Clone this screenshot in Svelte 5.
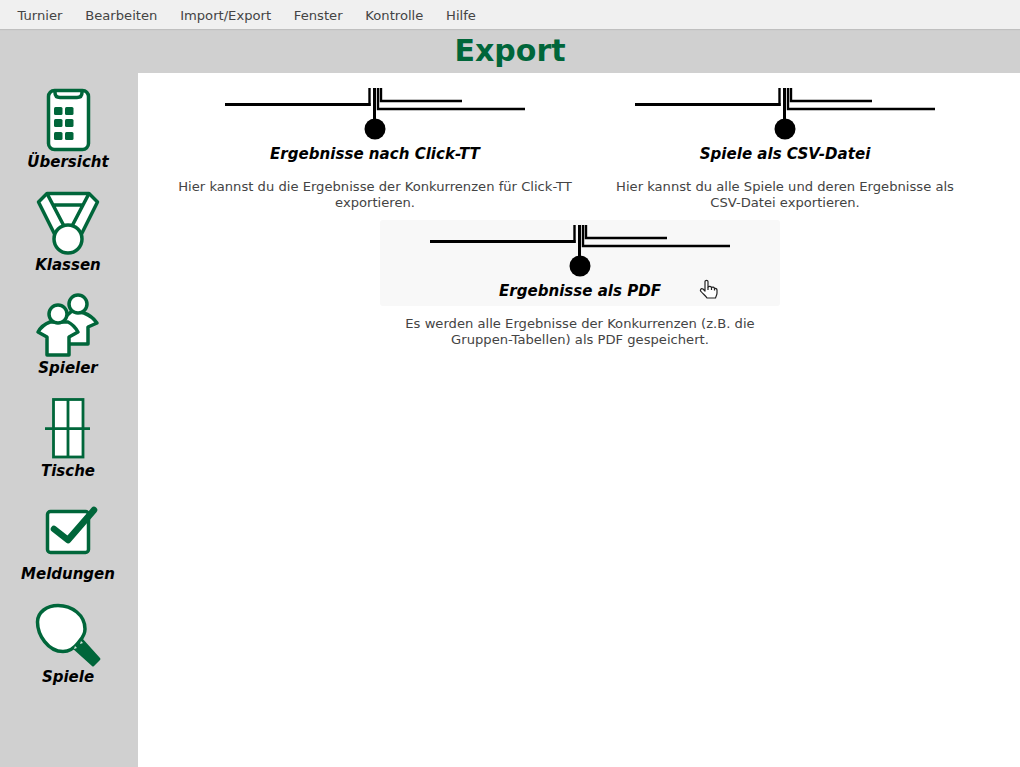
<script>
	const menu = ['Turnier', 'Bearbeiten', 'Import/Export', 'Fenster', 'Kontrolle', 'Hilfe'];

	const exports = [
		{
			title: 'Ergebnisse nach Click-TT',
			text: ['Hier kannst du die Ergebnisse der Konkurrenzen für Click-TT', 'exportieren.']
		},
		{
			title: 'Spiele als CSV-Datei',
			text: ['Hier kannst du alle Spiele und deren Ergebnisse als', 'CSV-Datei exportieren.']
		},
		{
			title: 'Ergebnisse als PDF',
			text: ['Es werden alle Ergebnisse der Konkurrenzen (z.B. die', 'Gruppen-Tabellen) als PDF gespeichert.'],
			hover: true
		}
	];
</script>

{#snippet overview()}
	<rect x="14.5" y="3.5" width="40" height="59" rx="6" class="shape" />
	<path d="M21 3.5 v2 q0 5 5 5 h17 q5 0 5 -5 v-2" class="line" />
	{#each [20, 32, 45] as y}
		<rect x="20" {y} width="8.5" height="8" rx="1.5" class="solid" />
		<rect x="31" {y} width="8.5" height="8" rx="1.5" class="solid" />
	{/each}
{/snippet}

{#snippet medal()}
	<path d="M13 3.5 H55 L63.5 12 L47 45 H21 L4.5 12 Z" class="shape" />
	<path d="M13 3.5 L19 15 H49 L55 3.5 M19 15 L31 38 M49 15 L37 38" class="line" />
	<circle cx="34" cy="49" r="14" class="shape" />
{/snippet}

{#snippet players()}
	<path d="M38 18 L50 20 Q58 23 63 30 L54 34 V51 H30 V25 Z" class="shape" />
	<circle cx="44" cy="11" r="9" class="shape" />
	<path d="M16 29 Q8 32 4 39 L13 44 V62 H35 V44 L44 39 Q40 32 34 29 Z" class="shape" />
	<circle cx="24" cy="21" r="9" class="shape" />
{/snippet}

{#snippet tables()}
	<rect x="19.5" y="3.5" width="29.5" height="57.5" class="shape thin" />
	<path d="M34 3.5 V61 M11 32.7 H56" class="line thin" />
{/snippet}

{#snippet checks()}
	<rect x="13.5" y="12.5" width="41" height="41" rx="3" class="shape" />
	<path d="M20 30 L34 41 L60 11" class="line tick" />
{/snippet}

{#snippet paddle()}
	<path d="M48 36 L66 56 Q67 57 66 58 L60 64 Q59 65 58 64 L38 46 Z" class="solid" />
	<path d="M24 3.5 C38 3.5 51 13 51 27 C51 34 47 37 44 41 C41 45 37 49.5 29 49.5 C14 49.5 3.5 33 3.5 20 C3.5 10 13 3.5 24 3.5 Z" class="shape" />
	<path d="M47 39 L49 41 L46 42 Z M41 44 L43 46 L40 47 Z" class="dot" />
{/snippet}

{#snippet lines()}
	<svg class="plug" width="300" height="56" viewBox="0 0 300 56">
		<path d="M0 19.5 H145.5" class="wire" />
		<path d="M144.5 3 V21" class="wire fine" />
		<path d="M149.5 3 V44" class="wire" />
		<path d="M153 3 V24 H300 M156 3 V16 H237" class="wire fine" />
		<circle cx="150" cy="44" r="10.5" />
	</svg>
{/snippet}

<div class="app">
	<nav class="menubar">
		{#each menu as item}
			<span class="menu-item">{item}</span>
		{/each}
	</nav>

	<header class="title">Export</header>

	<div class="body">
		<aside class="sidebar">
			{#each [['Übersicht', overview], ['Klassen', medal], ['Spieler', players], ['Tische', tables], ['Meldungen', checks], ['Spiele', paddle]] as [label, icon]}
				<div class="nav-item">
					<svg width="68" height="68" viewBox="0 0 68 68">{@render icon()}</svg>
					<span>{label}</span>
				</div>
			{/each}
		</aside>

		<main class="content">
			{#each exports as entry}
				<section class="entry">
					<button class="entry-button" class:hover={entry.hover}>
						{@render lines()}
						<strong>{entry.title}</strong>
					</button>
					<p>
						{#each entry.text as line}
							<span>{line}</span>
						{/each}
					</p>
				</section>
			{/each}
		</main>
	</div>

	<!-- mouse pointer caught in the screenshot -->
	<svg class="cursor" width="19" height="20" viewBox="0 0 19 20">
		<path d="M6 2.5 C6 1 9 1 9 2.5 V8 C10 7 12 7 12.5 8.5 C13.5 7.8 15 8 15.5 9.5 C16.5 9 18 9.8 18 11 V14 C18 16 17 17 16.5 19 H8 C7 17 4 15 2 12.5 C.5 11 2 9 4 10 L6 12 Z" />
		<path d="M9 8 V11 M12.5 8.5 V11 M15.5 9.5 V11.5" />
	</svg>
</div>

<style>
	:global(body) {
		background: #fff;
	}

	.app {
		position: relative;
		display: flex;
		flex-direction: column;
		height: 767px;
		overflow: hidden;
		background: #d0d0d0;
		font-family: 'DejaVu Sans', sans-serif;
	}

	/* === MENU === */
	.menubar {
		display: flex;
		flex: none;
		height: 29px;
		padding-left: 6.1px;
		background: #f0f0f0;
		box-shadow: 0 1px 1px rgba(0, 0, 0, 0.08);
	}

	.menu-item {
		padding: 0 11.4px;
		font-size: 13.13px;
		line-height: 31px;
		color: #444;
	}

	.title {
		flex: none;
		height: 44px;
		font-size: 30px;
		font-weight: bold;
		line-height: 44px;
		text-align: center;
		color: #00663a;
	}

	.body {
		display: flex;
		flex: 1;
	}

	/* === SIDEBAR === */
	.sidebar {
		flex: none;
		width: 136px;
		padding: 14px 2px 0 0;
	}

	.nav-item {
		display: flex;
		flex-direction: column;
		align-items: center;
		height: 103px;
	}

	.nav-item span {
		margin-top: -2px;
		font-size: 15px;
		font-weight: bold;
		font-style: italic;
		line-height: 18px;
		color: #000;
	}

	.shape {
		fill: #fff;
		stroke: #00663a;
		stroke-width: 3.5;
		stroke-linejoin: round;
	}

	.line {
		fill: none;
		stroke: #00663a;
		stroke-width: 3.5;
		stroke-linejoin: round;
	}

	.thin {
		stroke-width: 2.8;
		stroke-linejoin: miter;
	}

	.tick {
		stroke-width: 6.5;
		stroke-linecap: round;
	}

	.solid {
		fill: #00663a;
	}

	.dot {
		fill: #d8e8df;
	}

	/* === EXPORT ENTRIES === */
	.content {
		display: flex;
		flex: 1;
		flex-wrap: wrap;
		align-content: flex-start;
		justify-content: center;
		padding: 10px 0 0 2px;
		background: #fff;
	}

	.entry {
		width: 400px;
		margin: 0 5px;
		text-align: center;
	}

	.entry-button {
		display: flex;
		flex-direction: column;
		align-items: center;
		width: 400px;
		height: 86px;
		padding: 2px 0 0;
		border: 0;
		border-radius: 3px;
		background: none;
		font-family: inherit;
		color: #000;
	}

	.entry-button.hover {
		background: #f8f8f8;
	}

	.entry-button strong {
		margin-top: 4px;
		font-size: 15.07px;
		font-style: italic;
		line-height: 18px;
	}

	.plug {
		flex: none;
	}

	.wire {
		fill: none;
		stroke: #000;
		stroke-width: 3;
	}

	.fine {
		stroke-width: 2.4;
	}

	.entry p {
		margin: 10px 0 9px;
		font-size: 13.13px;
		line-height: 16px;
		color: #444;
	}

	.entry p span {
		display: block;
	}

	.cursor {
		position: absolute;
		left: 699px;
		top: 279px;
	}

	.cursor path {
		fill: #fff;
		stroke: #222;
		stroke-width: 1.2;
		stroke-linejoin: round;
	}
</style>
